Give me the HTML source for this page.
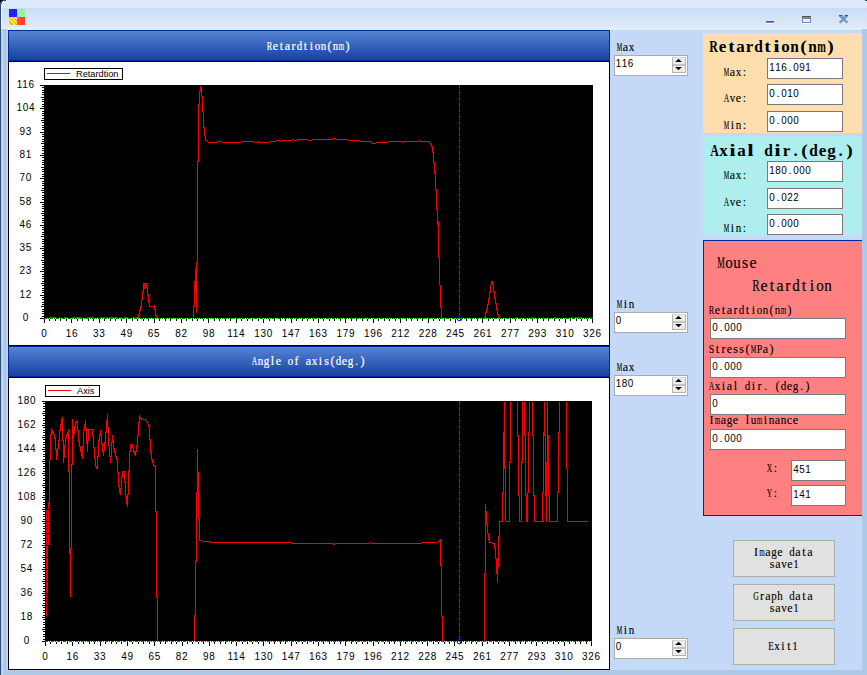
<!DOCTYPE html>
<html><head><meta charset="utf-8">
<style>
*{margin:0;padding:0;box-sizing:border-box}
html,body{width:867px;height:675px;overflow:hidden;background:#b0c9eb}
body{position:relative;font-family:"Liberation Sans",sans-serif}
.a{position:absolute}
.lg{font-family:"Liberation Sans",sans-serif;font-size:9.5px;fill:#000}
.ax{font-family:"Liberation Sans",sans-serif;font-size:10px;fill:#000;letter-spacing:0.7px}
.box{position:absolute;background:#fff;border:1px solid #7a7a7a}
.spin{position:absolute;background:#fff;border:1px solid #ababab}
.btn{position:absolute;background:#e1e1e1;border:1px solid #adadad}
.hdr{position:absolute;background:linear-gradient(#5584d4,#1741a0);border:1px solid #002c98}
</style></head><body>

<div class="a" style="left:0;top:0;width:7px;height:7px;background:#2e4e78"></div>
<div class="a" style="left:0;top:0;width:2px;height:3px;background:#000"></div>
<div class="a" style="left:0;top:0;width:1px;height:675px;background:#2e4e78"></div>
<div class="a" style="left:1px;top:0;width:866px;height:29px;background:linear-gradient(#e5ecf8 0,#dee9f9 1px,#dee9f9 8px,#c9dcf6 8px,#dfeafa 27px,#dfeafa 28px,#dff6ff 28px,#e0f4ff 29px);border-top-left-radius:4px;"></div>
<div class="a" style="left:1px;top:4px;width:1px;height:25px;background:#eef5fd"></div>
<svg class="a" style="left:0;top:0" width="8" height="8" shape-rendering="crispEdges"><rect x="0" y="0" width="2" height="2" fill="#000"/><rect x="2" y="0" width="4" height="1" fill="#2a4a74"/><rect x="1" y="1" width="2" height="1" fill="#3a5f90"/><rect x="0" y="2" width="1" height="6" fill="#2e4e78"/><rect x="1" y="2" width="1" height="2" fill="#4a70a0"/><rect x="3" y="1" width="2" height="1" fill="#f0f6ff"/><rect x="2" y="2" width="1" height="2" fill="#f0f6ff"/></svg>
<div class="a" style="left:865px;top:0;width:2px;height:1px;background:#2a4a74"></div><div class="a" style="left:865px;top:1px;width:2px;height:1px;background:#eef4fc"></div>
<div class="a" style="left:1px;top:29px;width:1px;height:646px;background:#b4cce8"></div>
<div class="a" style="left:2px;top:29px;width:1px;height:646px;background:#c4d9f4"></div>
<div class="a" style="left:7px;top:29px;width:1px;height:641px;background:#c0dcff"></div>
<div class="a" style="left:9px;top:9px;width:8px;height:8px;background:#2323ff"></div>
<div class="a" style="left:17px;top:9px;width:8px;height:8px;background:repeating-linear-gradient(-45deg,#9ff29f 0,#9ff29f 3px,#92e892 3px,#92e892 4px)"></div>
<div class="a" style="left:9px;top:17px;width:8px;height:8px;background:repeating-linear-gradient(45deg,#ffe033 0,#ffe033 2px,#d8b830 2px,#d8b830 3px)"></div>
<div class="a" style="left:17px;top:17px;width:8px;height:8px;background:linear-gradient(90deg,#ff5040,#ff4030 60%,#e04838)"></div>
<div class="a" style="left:766px;top:21px;width:8px;height:1px;background:#5a5a5a"></div><div class="a" style="left:766px;top:22px;width:8px;height:1px;background:#6f88b4"></div><div class="a" style="left:766px;top:23px;width:8px;height:1px;background:#f4f8ff"></div>
<div class="a" style="left:802px;top:16px;width:9px;height:1px;background:#555"></div><div class="a" style="left:802px;top:17px;width:9px;height:6px;border:1px solid #7088b4;border-top:2px solid #7088b4;background:#e4eefc"></div><div class="a" style="left:802px;top:23px;width:9px;height:1px;background:#f4f8ff"></div>
<svg class="a" style="left:836px;top:13px" width="14" height="12" viewBox="0 0 14 12"><path d="M3.6 2.8 L11.4 9.8 M11.4 2.8 L3.6 9.8" stroke="#7090c0" stroke-width="2.2"/><path d="M3 2.5 h3 M9 2.5 h3" stroke="#555" stroke-width="1"/><path d="M6 2.5 L7.5 3.8 L9 2.5" stroke="#506890" stroke-width="1" fill="none"/></svg>
<div class="a" style="left:8px;top:29px;width:854px;height:641px;background:#c3d9f7"></div>
<div class="a" style="left:8px;top:29px;width:854px;height:1px;background:#d8ecff"></div>
<div class="hdr" style="left:8px;top:30px;width:602px;height:31px"></div>
<div class="a" style="left:8px;top:61px;width:602px;height:285px;border:1px solid #000;background:#fff"></div>
<div class="hdr" style="left:8px;top:346px;width:602px;height:31px"></div>
<div class="a" style="left:8px;top:377px;width:602px;height:293px;border:1px solid #000;background:#fff"></div>
<svg class="a" style="left:0;top:0" width="867" height="675" viewBox="0 0 867 675"><rect x="44" y="85" width="549" height="233" fill="#000"/>
<rect x="40" y="318" width="4" height="1" fill="#000"/>
<rect x="42" y="316" width="2" height="1" fill="#000"/>
<rect x="42" y="313" width="2" height="1" fill="#000"/>
<rect x="42" y="311" width="2" height="1" fill="#000"/>
<rect x="42" y="309" width="2" height="1" fill="#000"/>
<rect x="41" y="306" width="3" height="1" fill="#000"/>
<rect x="42" y="304" width="2" height="1" fill="#000"/>
<rect x="42" y="302" width="2" height="1" fill="#000"/>
<rect x="42" y="299" width="2" height="1" fill="#000"/>
<rect x="42" y="297" width="2" height="1" fill="#000"/>
<rect x="40" y="295" width="4" height="1" fill="#000"/>
<rect x="42" y="292" width="2" height="1" fill="#000"/>
<rect x="42" y="290" width="2" height="1" fill="#000"/>
<rect x="42" y="288" width="2" height="1" fill="#000"/>
<rect x="42" y="285" width="2" height="1" fill="#000"/>
<rect x="41" y="283" width="3" height="1" fill="#000"/>
<rect x="42" y="281" width="2" height="1" fill="#000"/>
<rect x="42" y="278" width="2" height="1" fill="#000"/>
<rect x="42" y="276" width="2" height="1" fill="#000"/>
<rect x="42" y="274" width="2" height="1" fill="#000"/>
<rect x="40" y="271" width="4" height="1" fill="#000"/>
<rect x="42" y="269" width="2" height="1" fill="#000"/>
<rect x="42" y="267" width="2" height="1" fill="#000"/>
<rect x="42" y="264" width="2" height="1" fill="#000"/>
<rect x="42" y="262" width="2" height="1" fill="#000"/>
<rect x="41" y="260" width="3" height="1" fill="#000"/>
<rect x="42" y="257" width="2" height="1" fill="#000"/>
<rect x="42" y="255" width="2" height="1" fill="#000"/>
<rect x="42" y="253" width="2" height="1" fill="#000"/>
<rect x="42" y="250" width="2" height="1" fill="#000"/>
<rect x="40" y="248" width="4" height="1" fill="#000"/>
<rect x="42" y="246" width="2" height="1" fill="#000"/>
<rect x="42" y="243" width="2" height="1" fill="#000"/>
<rect x="42" y="241" width="2" height="1" fill="#000"/>
<rect x="42" y="239" width="2" height="1" fill="#000"/>
<rect x="41" y="236" width="3" height="1" fill="#000"/>
<rect x="42" y="234" width="2" height="1" fill="#000"/>
<rect x="42" y="232" width="2" height="1" fill="#000"/>
<rect x="42" y="229" width="2" height="1" fill="#000"/>
<rect x="42" y="227" width="2" height="1" fill="#000"/>
<rect x="40" y="225" width="4" height="1" fill="#000"/>
<rect x="42" y="222" width="2" height="1" fill="#000"/>
<rect x="42" y="220" width="2" height="1" fill="#000"/>
<rect x="42" y="218" width="2" height="1" fill="#000"/>
<rect x="42" y="215" width="2" height="1" fill="#000"/>
<rect x="41" y="213" width="3" height="1" fill="#000"/>
<rect x="42" y="211" width="2" height="1" fill="#000"/>
<rect x="42" y="208" width="2" height="1" fill="#000"/>
<rect x="42" y="206" width="2" height="1" fill="#000"/>
<rect x="42" y="204" width="2" height="1" fill="#000"/>
<rect x="40" y="202" width="4" height="1" fill="#000"/>
<rect x="42" y="199" width="2" height="1" fill="#000"/>
<rect x="42" y="197" width="2" height="1" fill="#000"/>
<rect x="42" y="195" width="2" height="1" fill="#000"/>
<rect x="42" y="192" width="2" height="1" fill="#000"/>
<rect x="41" y="190" width="3" height="1" fill="#000"/>
<rect x="42" y="188" width="2" height="1" fill="#000"/>
<rect x="42" y="185" width="2" height="1" fill="#000"/>
<rect x="42" y="183" width="2" height="1" fill="#000"/>
<rect x="42" y="181" width="2" height="1" fill="#000"/>
<rect x="40" y="178" width="4" height="1" fill="#000"/>
<rect x="42" y="176" width="2" height="1" fill="#000"/>
<rect x="42" y="174" width="2" height="1" fill="#000"/>
<rect x="42" y="171" width="2" height="1" fill="#000"/>
<rect x="42" y="169" width="2" height="1" fill="#000"/>
<rect x="41" y="167" width="3" height="1" fill="#000"/>
<rect x="42" y="164" width="2" height="1" fill="#000"/>
<rect x="42" y="162" width="2" height="1" fill="#000"/>
<rect x="42" y="160" width="2" height="1" fill="#000"/>
<rect x="42" y="157" width="2" height="1" fill="#000"/>
<rect x="40" y="155" width="4" height="1" fill="#000"/>
<rect x="42" y="153" width="2" height="1" fill="#000"/>
<rect x="42" y="150" width="2" height="1" fill="#000"/>
<rect x="42" y="148" width="2" height="1" fill="#000"/>
<rect x="42" y="146" width="2" height="1" fill="#000"/>
<rect x="41" y="143" width="3" height="1" fill="#000"/>
<rect x="42" y="141" width="2" height="1" fill="#000"/>
<rect x="42" y="139" width="2" height="1" fill="#000"/>
<rect x="42" y="136" width="2" height="1" fill="#000"/>
<rect x="42" y="134" width="2" height="1" fill="#000"/>
<rect x="40" y="132" width="4" height="1" fill="#000"/>
<rect x="42" y="129" width="2" height="1" fill="#000"/>
<rect x="42" y="127" width="2" height="1" fill="#000"/>
<rect x="42" y="125" width="2" height="1" fill="#000"/>
<rect x="42" y="122" width="2" height="1" fill="#000"/>
<rect x="41" y="120" width="3" height="1" fill="#000"/>
<rect x="42" y="118" width="2" height="1" fill="#000"/>
<rect x="42" y="115" width="2" height="1" fill="#000"/>
<rect x="42" y="113" width="2" height="1" fill="#000"/>
<rect x="42" y="111" width="2" height="1" fill="#000"/>
<rect x="40" y="108" width="4" height="1" fill="#000"/>
<rect x="42" y="106" width="2" height="1" fill="#000"/>
<rect x="42" y="104" width="2" height="1" fill="#000"/>
<rect x="42" y="101" width="2" height="1" fill="#000"/>
<rect x="42" y="99" width="2" height="1" fill="#000"/>
<rect x="41" y="97" width="3" height="1" fill="#000"/>
<rect x="42" y="94" width="2" height="1" fill="#000"/>
<rect x="42" y="92" width="2" height="1" fill="#000"/>
<rect x="42" y="90" width="2" height="1" fill="#000"/>
<rect x="42" y="87" width="2" height="1" fill="#000"/>
<rect x="40" y="85" width="4" height="1" fill="#000"/>
<text x="25.8" y="321.0" text-anchor="middle" class="ax">0</text>
<text x="25.8" y="297.7" text-anchor="middle" class="ax">12</text>
<text x="25.8" y="274.4" text-anchor="middle" class="ax">23</text>
<text x="25.8" y="251.1" text-anchor="middle" class="ax">35</text>
<text x="25.8" y="227.8" text-anchor="middle" class="ax">46</text>
<text x="25.8" y="204.5" text-anchor="middle" class="ax">58</text>
<text x="25.8" y="181.2" text-anchor="middle" class="ax">70</text>
<text x="25.8" y="157.9" text-anchor="middle" class="ax">81</text>
<text x="25.8" y="134.6" text-anchor="middle" class="ax">93</text>
<text x="25.8" y="111.3" text-anchor="middle" class="ax">104</text>
<text x="25.8" y="88.0" text-anchor="middle" class="ax">116</text>
<rect x="44" y="319" width="1" height="4" fill="#000"/>
<rect x="49" y="319" width="1" height="2" fill="#000"/>
<rect x="55" y="319" width="1" height="2" fill="#000"/>
<rect x="60" y="319" width="1" height="2" fill="#000"/>
<rect x="66" y="319" width="1" height="2" fill="#000"/>
<rect x="71" y="319" width="1" height="4" fill="#000"/>
<rect x="77" y="319" width="1" height="2" fill="#000"/>
<rect x="82" y="319" width="1" height="2" fill="#000"/>
<rect x="88" y="319" width="1" height="2" fill="#000"/>
<rect x="93" y="319" width="1" height="2" fill="#000"/>
<rect x="99" y="319" width="1" height="4" fill="#000"/>
<rect x="104" y="319" width="1" height="2" fill="#000"/>
<rect x="110" y="319" width="1" height="2" fill="#000"/>
<rect x="115" y="319" width="1" height="2" fill="#000"/>
<rect x="121" y="319" width="1" height="2" fill="#000"/>
<rect x="126" y="319" width="1" height="4" fill="#000"/>
<rect x="132" y="319" width="1" height="2" fill="#000"/>
<rect x="137" y="319" width="1" height="2" fill="#000"/>
<rect x="143" y="319" width="1" height="2" fill="#000"/>
<rect x="148" y="319" width="1" height="2" fill="#000"/>
<rect x="154" y="319" width="1" height="4" fill="#000"/>
<rect x="159" y="319" width="1" height="2" fill="#000"/>
<rect x="165" y="319" width="1" height="2" fill="#000"/>
<rect x="170" y="319" width="1" height="2" fill="#000"/>
<rect x="176" y="319" width="1" height="2" fill="#000"/>
<rect x="181" y="319" width="1" height="4" fill="#000"/>
<rect x="186" y="319" width="1" height="2" fill="#000"/>
<rect x="192" y="319" width="1" height="2" fill="#000"/>
<rect x="197" y="319" width="1" height="2" fill="#000"/>
<rect x="203" y="319" width="1" height="2" fill="#000"/>
<rect x="208" y="319" width="1" height="4" fill="#000"/>
<rect x="214" y="319" width="1" height="2" fill="#000"/>
<rect x="219" y="319" width="1" height="2" fill="#000"/>
<rect x="225" y="319" width="1" height="2" fill="#000"/>
<rect x="230" y="319" width="1" height="2" fill="#000"/>
<rect x="236" y="319" width="1" height="4" fill="#000"/>
<rect x="241" y="319" width="1" height="2" fill="#000"/>
<rect x="247" y="319" width="1" height="2" fill="#000"/>
<rect x="252" y="319" width="1" height="2" fill="#000"/>
<rect x="258" y="319" width="1" height="2" fill="#000"/>
<rect x="263" y="319" width="1" height="4" fill="#000"/>
<rect x="269" y="319" width="1" height="2" fill="#000"/>
<rect x="274" y="319" width="1" height="2" fill="#000"/>
<rect x="280" y="319" width="1" height="2" fill="#000"/>
<rect x="285" y="319" width="1" height="2" fill="#000"/>
<rect x="291" y="319" width="1" height="4" fill="#000"/>
<rect x="296" y="319" width="1" height="2" fill="#000"/>
<rect x="302" y="319" width="1" height="2" fill="#000"/>
<rect x="307" y="319" width="1" height="2" fill="#000"/>
<rect x="313" y="319" width="1" height="2" fill="#000"/>
<rect x="318" y="319" width="1" height="4" fill="#000"/>
<rect x="323" y="319" width="1" height="2" fill="#000"/>
<rect x="329" y="319" width="1" height="2" fill="#000"/>
<rect x="334" y="319" width="1" height="2" fill="#000"/>
<rect x="340" y="319" width="1" height="2" fill="#000"/>
<rect x="345" y="319" width="1" height="4" fill="#000"/>
<rect x="351" y="319" width="1" height="2" fill="#000"/>
<rect x="356" y="319" width="1" height="2" fill="#000"/>
<rect x="362" y="319" width="1" height="2" fill="#000"/>
<rect x="367" y="319" width="1" height="2" fill="#000"/>
<rect x="373" y="319" width="1" height="4" fill="#000"/>
<rect x="378" y="319" width="1" height="2" fill="#000"/>
<rect x="384" y="319" width="1" height="2" fill="#000"/>
<rect x="389" y="319" width="1" height="2" fill="#000"/>
<rect x="395" y="319" width="1" height="2" fill="#000"/>
<rect x="400" y="319" width="1" height="4" fill="#000"/>
<rect x="406" y="319" width="1" height="2" fill="#000"/>
<rect x="411" y="319" width="1" height="2" fill="#000"/>
<rect x="417" y="319" width="1" height="2" fill="#000"/>
<rect x="422" y="319" width="1" height="2" fill="#000"/>
<rect x="428" y="319" width="1" height="4" fill="#000"/>
<rect x="433" y="319" width="1" height="2" fill="#000"/>
<rect x="439" y="319" width="1" height="2" fill="#000"/>
<rect x="444" y="319" width="1" height="2" fill="#000"/>
<rect x="450" y="319" width="1" height="2" fill="#000"/>
<rect x="455" y="319" width="1" height="4" fill="#000"/>
<rect x="460" y="319" width="1" height="2" fill="#000"/>
<rect x="466" y="319" width="1" height="2" fill="#000"/>
<rect x="471" y="319" width="1" height="2" fill="#000"/>
<rect x="477" y="319" width="1" height="2" fill="#000"/>
<rect x="482" y="319" width="1" height="4" fill="#000"/>
<rect x="488" y="319" width="1" height="2" fill="#000"/>
<rect x="493" y="319" width="1" height="2" fill="#000"/>
<rect x="499" y="319" width="1" height="2" fill="#000"/>
<rect x="504" y="319" width="1" height="2" fill="#000"/>
<rect x="510" y="319" width="1" height="4" fill="#000"/>
<rect x="515" y="319" width="1" height="2" fill="#000"/>
<rect x="521" y="319" width="1" height="2" fill="#000"/>
<rect x="526" y="319" width="1" height="2" fill="#000"/>
<rect x="532" y="319" width="1" height="2" fill="#000"/>
<rect x="537" y="319" width="1" height="4" fill="#000"/>
<rect x="543" y="319" width="1" height="2" fill="#000"/>
<rect x="548" y="319" width="1" height="2" fill="#000"/>
<rect x="554" y="319" width="1" height="2" fill="#000"/>
<rect x="559" y="319" width="1" height="2" fill="#000"/>
<rect x="565" y="319" width="1" height="4" fill="#000"/>
<rect x="570" y="319" width="1" height="2" fill="#000"/>
<rect x="576" y="319" width="1" height="2" fill="#000"/>
<rect x="581" y="319" width="1" height="2" fill="#000"/>
<rect x="587" y="319" width="1" height="2" fill="#000"/>
<rect x="592" y="319" width="1" height="4" fill="#000"/>
<text x="44.5" y="337" text-anchor="middle" class="ax">0</text>
<text x="71.9" y="337" text-anchor="middle" class="ax">16</text>
<text x="99.3" y="337" text-anchor="middle" class="ax">33</text>
<text x="126.7" y="337" text-anchor="middle" class="ax">49</text>
<text x="154.1" y="337" text-anchor="middle" class="ax">65</text>
<text x="181.5" y="337" text-anchor="middle" class="ax">82</text>
<text x="208.9" y="337" text-anchor="middle" class="ax">98</text>
<text x="236.3" y="337" text-anchor="middle" class="ax">114</text>
<text x="263.7" y="337" text-anchor="middle" class="ax">130</text>
<text x="291.1" y="337" text-anchor="middle" class="ax">147</text>
<text x="318.5" y="337" text-anchor="middle" class="ax">163</text>
<text x="345.9" y="337" text-anchor="middle" class="ax">179</text>
<text x="373.3" y="337" text-anchor="middle" class="ax">196</text>
<text x="400.7" y="337" text-anchor="middle" class="ax">212</text>
<text x="428.1" y="337" text-anchor="middle" class="ax">228</text>
<text x="455.5" y="337" text-anchor="middle" class="ax">245</text>
<text x="482.9" y="337" text-anchor="middle" class="ax">261</text>
<text x="510.3" y="337" text-anchor="middle" class="ax">277</text>
<text x="537.7" y="337" text-anchor="middle" class="ax">293</text>
<text x="565.1" y="337" text-anchor="middle" class="ax">310</text>
<text x="592.5" y="337" text-anchor="middle" class="ax">326</text>
<line x1="44" y1="318.5" x2="593" y2="318.5" stroke="#009000" stroke-width="1" stroke-dasharray="3,1,1,1" shape-rendering="crispEdges"/>
<clipPath id="c44_85"><rect x="44" y="86" width="549" height="232"/></clipPath>
<polyline points="44,320" fill="none" stroke="#ff0000" stroke-width="1" shape-rendering="crispEdges" clip-path="url(#c44_85)"/>
<line x1="459.5" y1="85" x2="459.5" y2="318" stroke="#008800" stroke-width="1" stroke-dasharray="3,1,1,1" shape-rendering="crispEdges"/>
<circle cx="459.5" cy="318.3" r="2.5" fill="none" stroke="#0000ff" stroke-width="1"/>
<rect x="44.5" y="68.5" width="78" height="11" fill="#fff" stroke="#000" stroke-width="1"/>
<rect x="47" y="73" width="23" height="1" fill="#f00"/>
<text x="76" y="76.8" class="lg" textLength="42.5" lengthAdjust="spacingAndGlyphs">Retardtion</text>
<rect x="49" y="317" width="7" height="1" fill="#f00"/>
<rect x="59" y="317" width="1" height="1" fill="#f00"/>
<rect x="64" y="317" width="3" height="1" fill="#f00"/>
<rect x="72" y="317" width="10" height="1" fill="#f00"/>
<rect x="87" y="317" width="7" height="1" fill="#f00"/>
<rect x="97" y="317" width="1" height="1" fill="#f00"/>
<rect x="100" y="317" width="7" height="1" fill="#f00"/>
<rect x="109" y="317" width="8" height="1" fill="#f00"/>
<rect x="120" y="317" width="1" height="1" fill="#f00"/>
<rect x="124" y="317" width="3" height="1" fill="#f00"/>
<rect x="133" y="317" width="5" height="1" fill="#f00"/>
<rect x="516" y="317" width="1" height="1" fill="#f00"/>
<rect x="531" y="317" width="2" height="1" fill="#f00"/>
<rect x="543" y="317" width="1" height="1" fill="#f00"/>
<rect x="554" y="317" width="2" height="1" fill="#f00"/>
<rect x="571" y="317" width="2" height="1" fill="#f00"/>
<rect x="575" y="317" width="6" height="1" fill="#f00"/>
<rect x="585" y="317" width="1" height="1" fill="#f00"/>
<rect x="590" y="317" width="1" height="1" fill="#f00"/>
<rect x="138" y="314" width="1" height="4" fill="#f00"/>
<rect x="139" y="310" width="1" height="5" fill="#f00"/>
<rect x="140" y="306" width="1" height="5" fill="#f00"/>
<rect x="141" y="299" width="1" height="8" fill="#f00"/>
<rect x="142" y="291" width="1" height="9" fill="#f00"/>
<rect x="143" y="283" width="1" height="9" fill="#f00"/>
<rect x="144" y="283" width="1" height="6" fill="#f00"/>
<rect x="146" y="283" width="1" height="5" fill="#f00"/>
<rect x="147" y="287" width="1" height="8" fill="#f00"/>
<rect x="148" y="294" width="1" height="9" fill="#f00"/>
<rect x="149" y="302" width="1" height="5" fill="#f00"/>
<rect x="154" y="305" width="1" height="5" fill="#f00"/>
<rect x="155" y="309" width="1" height="7" fill="#f00"/>
<rect x="156" y="315" width="1" height="3" fill="#f00"/>
<rect x="193" y="306" width="1" height="12" fill="#f00"/>
<rect x="194" y="281" width="1" height="26" fill="#f00"/>
<rect x="195" y="268" width="1" height="24" fill="#f00"/>
<rect x="196" y="262" width="1" height="51" fill="#f00"/>
<rect x="197" y="161" width="1" height="102" fill="#f00"/>
<rect x="198" y="104" width="1" height="58" fill="#f00"/>
<rect x="199" y="91" width="1" height="14" fill="#f00"/>
<rect x="200" y="86" width="1" height="6" fill="#f00"/>
<rect x="201" y="88" width="1" height="9" fill="#f00"/>
<rect x="202" y="96" width="1" height="16" fill="#f00"/>
<rect x="203" y="111" width="1" height="17" fill="#f00"/>
<rect x="204" y="127" width="1" height="9" fill="#f00"/>
<rect x="205" y="135" width="1" height="6" fill="#f00"/>
<rect x="429" y="142" width="1" height="1" fill="#f00"/>
<rect x="430" y="143" width="1" height="2" fill="#f00"/>
<rect x="431" y="145" width="1" height="2" fill="#f00"/>
<rect x="432" y="146" width="1" height="7" fill="#f00"/>
<rect x="433" y="152" width="1" height="11" fill="#f00"/>
<rect x="434" y="162" width="1" height="12" fill="#f00"/>
<rect x="435" y="173" width="1" height="17" fill="#f00"/>
<rect x="436" y="189" width="1" height="21" fill="#f00"/>
<rect x="437" y="209" width="1" height="16" fill="#f00"/>
<rect x="438" y="221" width="1" height="37" fill="#f00"/>
<rect x="439" y="258" width="1" height="27" fill="#f00"/>
<rect x="440" y="285" width="1" height="23" fill="#f00"/>
<rect x="441" y="308" width="1" height="10" fill="#f00"/>
<rect x="484" y="317" width="1" height="1" fill="#f00"/>
<rect x="485" y="312" width="1" height="6" fill="#f00"/>
<rect x="486" y="309" width="1" height="4" fill="#f00"/>
<rect x="487" y="304" width="1" height="6" fill="#f00"/>
<rect x="488" y="298" width="1" height="7" fill="#f00"/>
<rect x="489" y="292" width="1" height="7" fill="#f00"/>
<rect x="490" y="285" width="1" height="8" fill="#f00"/>
<rect x="491" y="281" width="1" height="4" fill="#f00"/>
<rect x="492" y="281" width="1" height="4" fill="#f00"/>
<rect x="493" y="285" width="1" height="7" fill="#f00"/>
<rect x="494" y="291" width="1" height="8" fill="#f00"/>
<rect x="495" y="298" width="1" height="6" fill="#f00"/>
<rect x="496" y="303" width="1" height="7" fill="#f00"/>
<rect x="497" y="309" width="1" height="6" fill="#f00"/>
<rect x="498" y="314" width="1" height="4" fill="#f00"/>
<rect x="134" y="317" width="4" height="1" fill="#f00"/>
<rect x="145" y="283" width="1" height="1" fill="#f00"/>
<rect x="150" y="306" width="4" height="1" fill="#f00"/>
<rect x="206" y="140" width="1" height="1" fill="#f00"/>
<rect x="207" y="141" width="1" height="1" fill="#f00"/>
<rect x="208" y="142" width="9" height="1" fill="#f00"/>
<rect x="217" y="141" width="5" height="1" fill="#f00"/>
<rect x="222" y="142" width="20" height="1" fill="#f00"/>
<rect x="242" y="141" width="12" height="1" fill="#f00"/>
<rect x="254" y="142" width="3" height="1" fill="#f00"/>
<rect x="257" y="141" width="2" height="1" fill="#f00"/>
<rect x="259" y="142" width="11" height="1" fill="#f00"/>
<rect x="270" y="141" width="6" height="1" fill="#f00"/>
<rect x="276" y="140" width="3" height="1" fill="#f00"/>
<rect x="279" y="141" width="2" height="1" fill="#f00"/>
<rect x="281" y="140" width="11" height="1" fill="#f00"/>
<rect x="292" y="139" width="2" height="1" fill="#f00"/>
<rect x="294" y="140" width="3" height="1" fill="#f00"/>
<rect x="297" y="139" width="11" height="1" fill="#f00"/>
<rect x="308" y="140" width="4" height="1" fill="#f00"/>
<rect x="312" y="139" width="20" height="1" fill="#f00"/>
<rect x="332" y="138" width="1" height="1" fill="#f00"/>
<rect x="333" y="139" width="1" height="1" fill="#f00"/>
<rect x="334" y="138" width="1" height="1" fill="#f00"/>
<rect x="335" y="139" width="13" height="1" fill="#f00"/>
<rect x="348" y="140" width="11" height="1" fill="#f00"/>
<rect x="359" y="141" width="12" height="1" fill="#f00"/>
<rect x="371" y="142" width="1" height="1" fill="#f00"/>
<rect x="372" y="143" width="4" height="1" fill="#f00"/>
<rect x="376" y="142" width="12" height="1" fill="#f00"/>
<rect x="388" y="141" width="14" height="1" fill="#f00"/>
<rect x="402" y="142" width="1" height="1" fill="#f00"/>
<rect x="403" y="141" width="15" height="1" fill="#f00"/>
<rect x="418" y="140" width="1" height="1" fill="#f00"/>
<rect x="419" y="141" width="10" height="1" fill="#f00"/>
<rect x="45" y="401" width="547" height="240" fill="#000"/>
<rect x="42" y="641" width="3" height="1" fill="#000"/>
<rect x="43" y="639" width="2" height="1" fill="#000"/>
<rect x="43" y="636" width="2" height="1" fill="#000"/>
<rect x="43" y="634" width="2" height="1" fill="#000"/>
<rect x="43" y="631" width="2" height="1" fill="#000"/>
<rect x="42" y="629" width="3" height="1" fill="#000"/>
<rect x="43" y="627" width="2" height="1" fill="#000"/>
<rect x="43" y="624" width="2" height="1" fill="#000"/>
<rect x="43" y="622" width="2" height="1" fill="#000"/>
<rect x="43" y="619" width="2" height="1" fill="#000"/>
<rect x="42" y="617" width="3" height="1" fill="#000"/>
<rect x="43" y="615" width="2" height="1" fill="#000"/>
<rect x="43" y="612" width="2" height="1" fill="#000"/>
<rect x="43" y="610" width="2" height="1" fill="#000"/>
<rect x="43" y="607" width="2" height="1" fill="#000"/>
<rect x="42" y="605" width="3" height="1" fill="#000"/>
<rect x="43" y="603" width="2" height="1" fill="#000"/>
<rect x="43" y="600" width="2" height="1" fill="#000"/>
<rect x="43" y="598" width="2" height="1" fill="#000"/>
<rect x="43" y="595" width="2" height="1" fill="#000"/>
<rect x="42" y="593" width="3" height="1" fill="#000"/>
<rect x="43" y="591" width="2" height="1" fill="#000"/>
<rect x="43" y="588" width="2" height="1" fill="#000"/>
<rect x="43" y="586" width="2" height="1" fill="#000"/>
<rect x="43" y="583" width="2" height="1" fill="#000"/>
<rect x="42" y="581" width="3" height="1" fill="#000"/>
<rect x="43" y="579" width="2" height="1" fill="#000"/>
<rect x="43" y="576" width="2" height="1" fill="#000"/>
<rect x="43" y="574" width="2" height="1" fill="#000"/>
<rect x="43" y="571" width="2" height="1" fill="#000"/>
<rect x="42" y="569" width="3" height="1" fill="#000"/>
<rect x="43" y="567" width="2" height="1" fill="#000"/>
<rect x="43" y="564" width="2" height="1" fill="#000"/>
<rect x="43" y="562" width="2" height="1" fill="#000"/>
<rect x="43" y="559" width="2" height="1" fill="#000"/>
<rect x="42" y="557" width="3" height="1" fill="#000"/>
<rect x="43" y="555" width="2" height="1" fill="#000"/>
<rect x="43" y="552" width="2" height="1" fill="#000"/>
<rect x="43" y="550" width="2" height="1" fill="#000"/>
<rect x="43" y="547" width="2" height="1" fill="#000"/>
<rect x="42" y="545" width="3" height="1" fill="#000"/>
<rect x="43" y="543" width="2" height="1" fill="#000"/>
<rect x="43" y="540" width="2" height="1" fill="#000"/>
<rect x="43" y="538" width="2" height="1" fill="#000"/>
<rect x="43" y="535" width="2" height="1" fill="#000"/>
<rect x="42" y="533" width="3" height="1" fill="#000"/>
<rect x="43" y="531" width="2" height="1" fill="#000"/>
<rect x="43" y="528" width="2" height="1" fill="#000"/>
<rect x="43" y="526" width="2" height="1" fill="#000"/>
<rect x="43" y="523" width="2" height="1" fill="#000"/>
<rect x="42" y="521" width="3" height="1" fill="#000"/>
<rect x="43" y="519" width="2" height="1" fill="#000"/>
<rect x="43" y="516" width="2" height="1" fill="#000"/>
<rect x="43" y="514" width="2" height="1" fill="#000"/>
<rect x="43" y="511" width="2" height="1" fill="#000"/>
<rect x="42" y="509" width="3" height="1" fill="#000"/>
<rect x="43" y="507" width="2" height="1" fill="#000"/>
<rect x="43" y="504" width="2" height="1" fill="#000"/>
<rect x="43" y="502" width="2" height="1" fill="#000"/>
<rect x="43" y="499" width="2" height="1" fill="#000"/>
<rect x="42" y="497" width="3" height="1" fill="#000"/>
<rect x="43" y="495" width="2" height="1" fill="#000"/>
<rect x="43" y="492" width="2" height="1" fill="#000"/>
<rect x="43" y="490" width="2" height="1" fill="#000"/>
<rect x="43" y="487" width="2" height="1" fill="#000"/>
<rect x="42" y="485" width="3" height="1" fill="#000"/>
<rect x="43" y="483" width="2" height="1" fill="#000"/>
<rect x="43" y="480" width="2" height="1" fill="#000"/>
<rect x="43" y="478" width="2" height="1" fill="#000"/>
<rect x="43" y="475" width="2" height="1" fill="#000"/>
<rect x="42" y="473" width="3" height="1" fill="#000"/>
<rect x="43" y="471" width="2" height="1" fill="#000"/>
<rect x="43" y="468" width="2" height="1" fill="#000"/>
<rect x="43" y="466" width="2" height="1" fill="#000"/>
<rect x="43" y="463" width="2" height="1" fill="#000"/>
<rect x="42" y="461" width="3" height="1" fill="#000"/>
<rect x="43" y="459" width="2" height="1" fill="#000"/>
<rect x="43" y="456" width="2" height="1" fill="#000"/>
<rect x="43" y="454" width="2" height="1" fill="#000"/>
<rect x="43" y="451" width="2" height="1" fill="#000"/>
<rect x="42" y="449" width="3" height="1" fill="#000"/>
<rect x="43" y="447" width="2" height="1" fill="#000"/>
<rect x="43" y="444" width="2" height="1" fill="#000"/>
<rect x="43" y="442" width="2" height="1" fill="#000"/>
<rect x="43" y="439" width="2" height="1" fill="#000"/>
<rect x="42" y="437" width="3" height="1" fill="#000"/>
<rect x="43" y="435" width="2" height="1" fill="#000"/>
<rect x="43" y="432" width="2" height="1" fill="#000"/>
<rect x="43" y="430" width="2" height="1" fill="#000"/>
<rect x="43" y="427" width="2" height="1" fill="#000"/>
<rect x="42" y="425" width="3" height="1" fill="#000"/>
<rect x="43" y="423" width="2" height="1" fill="#000"/>
<rect x="43" y="420" width="2" height="1" fill="#000"/>
<rect x="43" y="418" width="2" height="1" fill="#000"/>
<rect x="43" y="415" width="2" height="1" fill="#000"/>
<rect x="42" y="413" width="3" height="1" fill="#000"/>
<rect x="43" y="411" width="2" height="1" fill="#000"/>
<rect x="43" y="408" width="2" height="1" fill="#000"/>
<rect x="43" y="406" width="2" height="1" fill="#000"/>
<rect x="43" y="403" width="2" height="1" fill="#000"/>
<rect x="42" y="401" width="3" height="1" fill="#000"/>
<text x="26.8" y="644.0" text-anchor="middle" class="ax">0</text>
<text x="26.8" y="620.0" text-anchor="middle" class="ax">18</text>
<text x="26.8" y="596.0" text-anchor="middle" class="ax">36</text>
<text x="26.8" y="572.0" text-anchor="middle" class="ax">54</text>
<text x="26.8" y="548.0" text-anchor="middle" class="ax">72</text>
<text x="26.8" y="524.0" text-anchor="middle" class="ax">90</text>
<text x="26.8" y="500.0" text-anchor="middle" class="ax">108</text>
<text x="26.8" y="476.0" text-anchor="middle" class="ax">126</text>
<text x="26.8" y="452.0" text-anchor="middle" class="ax">144</text>
<text x="26.8" y="428.0" text-anchor="middle" class="ax">162</text>
<text x="26.8" y="404.0" text-anchor="middle" class="ax">180</text>
<rect x="45" y="642" width="1" height="4" fill="#000"/>
<rect x="50" y="642" width="1" height="2" fill="#000"/>
<rect x="56" y="642" width="1" height="2" fill="#000"/>
<rect x="61" y="642" width="1" height="2" fill="#000"/>
<rect x="67" y="642" width="1" height="2" fill="#000"/>
<rect x="72" y="642" width="1" height="4" fill="#000"/>
<rect x="78" y="642" width="1" height="2" fill="#000"/>
<rect x="83" y="642" width="1" height="2" fill="#000"/>
<rect x="89" y="642" width="1" height="2" fill="#000"/>
<rect x="94" y="642" width="1" height="2" fill="#000"/>
<rect x="100" y="642" width="1" height="4" fill="#000"/>
<rect x="105" y="642" width="1" height="2" fill="#000"/>
<rect x="111" y="642" width="1" height="2" fill="#000"/>
<rect x="116" y="642" width="1" height="2" fill="#000"/>
<rect x="121" y="642" width="1" height="2" fill="#000"/>
<rect x="127" y="642" width="1" height="4" fill="#000"/>
<rect x="132" y="642" width="1" height="2" fill="#000"/>
<rect x="138" y="642" width="1" height="2" fill="#000"/>
<rect x="143" y="642" width="1" height="2" fill="#000"/>
<rect x="149" y="642" width="1" height="2" fill="#000"/>
<rect x="154" y="642" width="1" height="4" fill="#000"/>
<rect x="160" y="642" width="1" height="2" fill="#000"/>
<rect x="165" y="642" width="1" height="2" fill="#000"/>
<rect x="171" y="642" width="1" height="2" fill="#000"/>
<rect x="176" y="642" width="1" height="2" fill="#000"/>
<rect x="182" y="642" width="1" height="4" fill="#000"/>
<rect x="187" y="642" width="1" height="2" fill="#000"/>
<rect x="192" y="642" width="1" height="2" fill="#000"/>
<rect x="198" y="642" width="1" height="2" fill="#000"/>
<rect x="203" y="642" width="1" height="2" fill="#000"/>
<rect x="209" y="642" width="1" height="4" fill="#000"/>
<rect x="214" y="642" width="1" height="2" fill="#000"/>
<rect x="220" y="642" width="1" height="2" fill="#000"/>
<rect x="225" y="642" width="1" height="2" fill="#000"/>
<rect x="231" y="642" width="1" height="2" fill="#000"/>
<rect x="236" y="642" width="1" height="4" fill="#000"/>
<rect x="242" y="642" width="1" height="2" fill="#000"/>
<rect x="247" y="642" width="1" height="2" fill="#000"/>
<rect x="252" y="642" width="1" height="2" fill="#000"/>
<rect x="258" y="642" width="1" height="2" fill="#000"/>
<rect x="263" y="642" width="1" height="4" fill="#000"/>
<rect x="269" y="642" width="1" height="2" fill="#000"/>
<rect x="274" y="642" width="1" height="2" fill="#000"/>
<rect x="280" y="642" width="1" height="2" fill="#000"/>
<rect x="285" y="642" width="1" height="2" fill="#000"/>
<rect x="291" y="642" width="1" height="4" fill="#000"/>
<rect x="296" y="642" width="1" height="2" fill="#000"/>
<rect x="302" y="642" width="1" height="2" fill="#000"/>
<rect x="307" y="642" width="1" height="2" fill="#000"/>
<rect x="313" y="642" width="1" height="2" fill="#000"/>
<rect x="318" y="642" width="1" height="4" fill="#000"/>
<rect x="323" y="642" width="1" height="2" fill="#000"/>
<rect x="329" y="642" width="1" height="2" fill="#000"/>
<rect x="334" y="642" width="1" height="2" fill="#000"/>
<rect x="340" y="642" width="1" height="2" fill="#000"/>
<rect x="345" y="642" width="1" height="4" fill="#000"/>
<rect x="351" y="642" width="1" height="2" fill="#000"/>
<rect x="356" y="642" width="1" height="2" fill="#000"/>
<rect x="362" y="642" width="1" height="2" fill="#000"/>
<rect x="367" y="642" width="1" height="2" fill="#000"/>
<rect x="373" y="642" width="1" height="4" fill="#000"/>
<rect x="378" y="642" width="1" height="2" fill="#000"/>
<rect x="384" y="642" width="1" height="2" fill="#000"/>
<rect x="389" y="642" width="1" height="2" fill="#000"/>
<rect x="394" y="642" width="1" height="2" fill="#000"/>
<rect x="400" y="642" width="1" height="4" fill="#000"/>
<rect x="405" y="642" width="1" height="2" fill="#000"/>
<rect x="411" y="642" width="1" height="2" fill="#000"/>
<rect x="416" y="642" width="1" height="2" fill="#000"/>
<rect x="422" y="642" width="1" height="2" fill="#000"/>
<rect x="427" y="642" width="1" height="4" fill="#000"/>
<rect x="433" y="642" width="1" height="2" fill="#000"/>
<rect x="438" y="642" width="1" height="2" fill="#000"/>
<rect x="444" y="642" width="1" height="2" fill="#000"/>
<rect x="449" y="642" width="1" height="2" fill="#000"/>
<rect x="454" y="642" width="1" height="4" fill="#000"/>
<rect x="460" y="642" width="1" height="2" fill="#000"/>
<rect x="465" y="642" width="1" height="2" fill="#000"/>
<rect x="471" y="642" width="1" height="2" fill="#000"/>
<rect x="476" y="642" width="1" height="2" fill="#000"/>
<rect x="482" y="642" width="1" height="4" fill="#000"/>
<rect x="487" y="642" width="1" height="2" fill="#000"/>
<rect x="493" y="642" width="1" height="2" fill="#000"/>
<rect x="498" y="642" width="1" height="2" fill="#000"/>
<rect x="504" y="642" width="1" height="2" fill="#000"/>
<rect x="509" y="642" width="1" height="4" fill="#000"/>
<rect x="515" y="642" width="1" height="2" fill="#000"/>
<rect x="520" y="642" width="1" height="2" fill="#000"/>
<rect x="525" y="642" width="1" height="2" fill="#000"/>
<rect x="531" y="642" width="1" height="2" fill="#000"/>
<rect x="536" y="642" width="1" height="4" fill="#000"/>
<rect x="542" y="642" width="1" height="2" fill="#000"/>
<rect x="547" y="642" width="1" height="2" fill="#000"/>
<rect x="553" y="642" width="1" height="2" fill="#000"/>
<rect x="558" y="642" width="1" height="2" fill="#000"/>
<rect x="564" y="642" width="1" height="4" fill="#000"/>
<rect x="569" y="642" width="1" height="2" fill="#000"/>
<rect x="575" y="642" width="1" height="2" fill="#000"/>
<rect x="580" y="642" width="1" height="2" fill="#000"/>
<rect x="586" y="642" width="1" height="2" fill="#000"/>
<rect x="591" y="642" width="1" height="4" fill="#000"/>
<text x="45.5" y="660" text-anchor="middle" class="ax">0</text>
<text x="72.8" y="660" text-anchor="middle" class="ax">16</text>
<text x="100.1" y="660" text-anchor="middle" class="ax">33</text>
<text x="127.4" y="660" text-anchor="middle" class="ax">49</text>
<text x="154.7" y="660" text-anchor="middle" class="ax">65</text>
<text x="182.0" y="660" text-anchor="middle" class="ax">82</text>
<text x="209.3" y="660" text-anchor="middle" class="ax">98</text>
<text x="236.6" y="660" text-anchor="middle" class="ax">114</text>
<text x="263.9" y="660" text-anchor="middle" class="ax">130</text>
<text x="291.2" y="660" text-anchor="middle" class="ax">147</text>
<text x="318.5" y="660" text-anchor="middle" class="ax">163</text>
<text x="345.8" y="660" text-anchor="middle" class="ax">179</text>
<text x="373.1" y="660" text-anchor="middle" class="ax">196</text>
<text x="400.4" y="660" text-anchor="middle" class="ax">212</text>
<text x="427.7" y="660" text-anchor="middle" class="ax">228</text>
<text x="455.0" y="660" text-anchor="middle" class="ax">245</text>
<text x="482.3" y="660" text-anchor="middle" class="ax">261</text>
<text x="509.6" y="660" text-anchor="middle" class="ax">277</text>
<text x="536.9" y="660" text-anchor="middle" class="ax">293</text>
<text x="564.2" y="660" text-anchor="middle" class="ax">310</text>
<text x="591.5" y="660" text-anchor="middle" class="ax">326</text>
<line x1="45" y1="641.5" x2="592" y2="641.5" stroke="#009000" stroke-width="1" stroke-dasharray="3,1,1,1" shape-rendering="crispEdges"/>
<clipPath id="c45_401"><rect x="45" y="402" width="547" height="239"/></clipPath>
<polyline points="45,643" fill="none" stroke="#ff0000" stroke-width="1" shape-rendering="crispEdges" clip-path="url(#c45_401)"/>
<line x1="459.5" y1="401" x2="459.5" y2="641" stroke="#008800" stroke-width="1" stroke-dasharray="3,1,1,1" shape-rendering="crispEdges"/>
<circle cx="459.5" cy="641.3" r="2.5" fill="none" stroke="#0000ff" stroke-width="1"/>
<rect x="45.5" y="385.5" width="54" height="11" fill="#fff" stroke="#000" stroke-width="1"/>
<rect x="48" y="390" width="23" height="1" fill="#f00"/>
<text x="77" y="393.8" class="lg" textLength="17.5" lengthAdjust="spacingAndGlyphs">Axis</text>
<rect x="73" y="428" width="1" height="10" fill="#f00"/>
<rect x="74" y="426" width="1" height="8" fill="#f00"/>
<rect x="75" y="422" width="1" height="5" fill="#f00"/>
<rect x="76" y="421" width="1" height="2" fill="#f00"/>
<rect x="77" y="420" width="1" height="11" fill="#f00"/>
<rect x="78" y="430" width="1" height="12" fill="#f00"/>
<rect x="79" y="441" width="1" height="6" fill="#f00"/>
<rect x="80" y="446" width="1" height="6" fill="#f00"/>
<rect x="81" y="450" width="1" height="6" fill="#f00"/>
<rect x="82" y="446" width="1" height="13" fill="#f00"/>
<rect x="83" y="430" width="1" height="17" fill="#f00"/>
<rect x="84" y="424" width="1" height="7" fill="#f00"/>
<rect x="85" y="420" width="1" height="9" fill="#f00"/>
<rect x="86" y="428" width="1" height="16" fill="#f00"/>
<rect x="87" y="440" width="1" height="12" fill="#f00"/>
<rect x="88" y="429" width="1" height="12" fill="#f00"/>
<rect x="92" y="429" width="1" height="8" fill="#f00"/>
<rect x="93" y="436" width="1" height="12" fill="#f00"/>
<rect x="94" y="447" width="1" height="12" fill="#f00"/>
<rect x="95" y="458" width="1" height="9" fill="#f00"/>
<rect x="96" y="466" width="1" height="3" fill="#f00"/>
<rect x="97" y="456" width="1" height="13" fill="#f00"/>
<rect x="98" y="440" width="1" height="17" fill="#f00"/>
<rect x="99" y="434" width="1" height="7" fill="#f00"/>
<rect x="100" y="430" width="1" height="6" fill="#f00"/>
<rect x="101" y="435" width="1" height="9" fill="#f00"/>
<rect x="102" y="443" width="1" height="9" fill="#f00"/>
<rect x="103" y="450" width="1" height="6" fill="#f00"/>
<rect x="104" y="442" width="1" height="9" fill="#f00"/>
<rect x="105" y="432" width="1" height="11" fill="#f00"/>
<rect x="106" y="420" width="1" height="13" fill="#f00"/>
<rect x="107" y="414" width="1" height="14" fill="#f00"/>
<rect x="108" y="427" width="1" height="19" fill="#f00"/>
<rect x="109" y="445" width="1" height="12" fill="#f00"/>
<rect x="110" y="456" width="1" height="7" fill="#f00"/>
<rect x="111" y="442" width="1" height="15" fill="#f00"/>
<rect x="112" y="435" width="1" height="8" fill="#f00"/>
<rect x="113" y="441" width="1" height="8" fill="#f00"/>
<rect x="114" y="448" width="1" height="5" fill="#f00"/>
<rect x="115" y="452" width="1" height="5" fill="#f00"/>
<rect x="116" y="456" width="1" height="4" fill="#f00"/>
<rect x="117" y="459" width="1" height="14" fill="#f00"/>
<rect x="118" y="472" width="1" height="15" fill="#f00"/>
<rect x="119" y="486" width="1" height="7" fill="#f00"/>
<rect x="120" y="488" width="1" height="7" fill="#f00"/>
<rect x="121" y="477" width="1" height="12" fill="#f00"/>
<rect x="122" y="471" width="1" height="7" fill="#f00"/>
<rect x="124" y="471" width="1" height="12" fill="#f00"/>
<rect x="125" y="482" width="1" height="15" fill="#f00"/>
<rect x="126" y="496" width="1" height="8" fill="#f00"/>
<rect x="127" y="494" width="1" height="13" fill="#f00"/>
<rect x="128" y="470" width="1" height="25" fill="#f00"/>
<rect x="129" y="451" width="1" height="20" fill="#f00"/>
<rect x="130" y="444" width="1" height="8" fill="#f00"/>
<rect x="132" y="444" width="1" height="4" fill="#f00"/>
<rect x="133" y="447" width="1" height="5" fill="#f00"/>
<rect x="134" y="451" width="1" height="4" fill="#f00"/>
<rect x="135" y="451" width="1" height="5" fill="#f00"/>
<rect x="46" y="510" width="1" height="106" fill="#f00"/>
<rect x="47" y="545" width="1" height="48" fill="#f00"/>
<rect x="48" y="502" width="1" height="44" fill="#f00"/>
<rect x="49" y="460" width="1" height="43" fill="#f00"/>
<rect x="50" y="434" width="1" height="26" fill="#f00"/>
<rect x="51" y="428" width="1" height="7" fill="#f00"/>
<rect x="52" y="430" width="1" height="4" fill="#f00"/>
<rect x="53" y="432" width="1" height="3" fill="#f00"/>
<rect x="54" y="434" width="1" height="5" fill="#f00"/>
<rect x="55" y="438" width="1" height="12" fill="#f00"/>
<rect x="56" y="449" width="1" height="11" fill="#f00"/>
<rect x="57" y="448" width="1" height="8" fill="#f00"/>
<rect x="58" y="440" width="1" height="9" fill="#f00"/>
<rect x="59" y="430" width="1" height="11" fill="#f00"/>
<rect x="60" y="424" width="1" height="7" fill="#f00"/>
<rect x="61" y="419" width="1" height="6" fill="#f00"/>
<rect x="62" y="417" width="1" height="24" fill="#f00"/>
<rect x="63" y="440" width="1" height="23" fill="#f00"/>
<rect x="64" y="445" width="1" height="13" fill="#f00"/>
<rect x="65" y="438" width="1" height="8" fill="#f00"/>
<rect x="66" y="434" width="1" height="5" fill="#f00"/>
<rect x="67" y="432" width="1" height="3" fill="#f00"/>
<rect x="68" y="429" width="1" height="43" fill="#f00"/>
<rect x="69" y="471" width="1" height="83" fill="#f00"/>
<rect x="70" y="548" width="1" height="49" fill="#f00"/>
<rect x="71" y="464" width="1" height="85" fill="#f00"/>
<rect x="72" y="419" width="1" height="46" fill="#f00"/>
<rect x="136" y="445" width="1" height="7" fill="#f00"/>
<rect x="137" y="435" width="1" height="11" fill="#f00"/>
<rect x="138" y="422" width="1" height="14" fill="#f00"/>
<rect x="139" y="415" width="1" height="8" fill="#f00"/>
<rect x="140" y="417" width="1" height="2" fill="#f00"/>
<rect x="141" y="418" width="1" height="2" fill="#f00"/>
<rect x="145" y="420" width="1" height="1" fill="#f00"/>
<rect x="146" y="421" width="1" height="1" fill="#f00"/>
<rect x="147" y="422" width="1" height="2" fill="#f00"/>
<rect x="148" y="424" width="1" height="3" fill="#f00"/>
<rect x="149" y="426" width="1" height="14" fill="#f00"/>
<rect x="150" y="439" width="1" height="15" fill="#f00"/>
<rect x="151" y="453" width="1" height="7" fill="#f00"/>
<rect x="152" y="459" width="1" height="4" fill="#f00"/>
<rect x="153" y="462" width="1" height="4" fill="#f00"/>
<rect x="154" y="465" width="1" height="2" fill="#f00"/>
<rect x="155" y="466" width="1" height="46" fill="#f00"/>
<rect x="156" y="511" width="1" height="87" fill="#f00"/>
<rect x="157" y="598" width="1" height="43" fill="#f00"/>
<rect x="194" y="615" width="1" height="26" fill="#f00"/>
<rect x="195" y="561" width="1" height="55" fill="#f00"/>
<rect x="196" y="492" width="1" height="70" fill="#f00"/>
<rect x="197" y="449" width="1" height="44" fill="#f00"/>
<rect x="198" y="472" width="1" height="47" fill="#f00"/>
<rect x="199" y="518" width="1" height="23" fill="#f00"/>
<rect x="438" y="541" width="1" height="1" fill="#f00"/>
<rect x="439" y="540" width="1" height="1" fill="#f00"/>
<rect x="440" y="539" width="1" height="27" fill="#f00"/>
<rect x="441" y="565" width="1" height="52" fill="#f00"/>
<rect x="442" y="616" width="1" height="25" fill="#f00"/>
<rect x="484" y="573" width="1" height="68" fill="#f00"/>
<rect x="485" y="504" width="1" height="70" fill="#f00"/>
<rect x="486" y="511" width="1" height="14" fill="#f00"/>
<rect x="487" y="524" width="1" height="10" fill="#f00"/>
<rect x="488" y="533" width="1" height="7" fill="#f00"/>
<rect x="489" y="539" width="1" height="4" fill="#f00"/>
<rect x="494" y="543" width="1" height="6" fill="#f00"/>
<rect x="495" y="548" width="1" height="11" fill="#f00"/>
<rect x="496" y="558" width="1" height="16" fill="#f00"/>
<rect x="497" y="566" width="1" height="16" fill="#f00"/>
<rect x="498" y="536" width="1" height="31" fill="#f00"/>
<rect x="499" y="521" width="1" height="16" fill="#f00"/>
<rect x="502" y="492" width="1" height="30" fill="#f00"/>
<rect x="503" y="432" width="1" height="61" fill="#f00"/>
<rect x="504" y="402" width="1" height="67" fill="#f00"/>
<rect x="505" y="469" width="1" height="53" fill="#f00"/>
<rect x="509" y="462" width="1" height="60" fill="#f00"/>
<rect x="510" y="402" width="1" height="61" fill="#f00"/>
<rect x="517" y="402" width="1" height="34" fill="#f00"/>
<rect x="518" y="435" width="1" height="61" fill="#f00"/>
<rect x="519" y="495" width="1" height="27" fill="#f00"/>
<rect x="521" y="462" width="1" height="60" fill="#f00"/>
<rect x="522" y="402" width="1" height="61" fill="#f00"/>
<rect x="524" y="402" width="1" height="34" fill="#f00"/>
<rect x="525" y="435" width="1" height="61" fill="#f00"/>
<rect x="526" y="495" width="1" height="27" fill="#f00"/>
<rect x="527" y="492" width="1" height="30" fill="#f00"/>
<rect x="528" y="432" width="1" height="61" fill="#f00"/>
<rect x="529" y="402" width="1" height="31" fill="#f00"/>
<rect x="532" y="402" width="1" height="34" fill="#f00"/>
<rect x="533" y="435" width="1" height="61" fill="#f00"/>
<rect x="534" y="495" width="1" height="27" fill="#f00"/>
<rect x="542" y="492" width="1" height="30" fill="#f00"/>
<rect x="543" y="432" width="1" height="61" fill="#f00"/>
<rect x="544" y="402" width="1" height="34" fill="#f00"/>
<rect x="545" y="435" width="1" height="61" fill="#f00"/>
<rect x="546" y="462" width="1" height="60" fill="#f00"/>
<rect x="547" y="402" width="1" height="61" fill="#f00"/>
<rect x="548" y="435" width="1" height="61" fill="#f00"/>
<rect x="549" y="495" width="1" height="27" fill="#f00"/>
<rect x="557" y="492" width="1" height="30" fill="#f00"/>
<rect x="558" y="432" width="1" height="61" fill="#f00"/>
<rect x="559" y="402" width="1" height="31" fill="#f00"/>
<rect x="566" y="402" width="1" height="67" fill="#f00"/>
<rect x="567" y="469" width="1" height="53" fill="#f00"/>
<rect x="89" y="429" width="3" height="1" fill="#f00"/>
<rect x="123" y="471" width="1" height="1" fill="#f00"/>
<rect x="131" y="444" width="1" height="1" fill="#f00"/>
<rect x="142" y="419" width="3" height="1" fill="#f00"/>
<rect x="199" y="540" width="3" height="1" fill="#f00"/>
<rect x="202" y="541" width="7" height="1" fill="#f00"/>
<rect x="209" y="542" width="82" height="1" fill="#f00"/>
<rect x="291" y="543" width="42" height="1" fill="#f00"/>
<rect x="333" y="544" width="2" height="1" fill="#f00"/>
<rect x="335" y="543" width="35" height="1" fill="#f00"/>
<rect x="370" y="542" width="1" height="1" fill="#f00"/>
<rect x="371" y="543" width="51" height="1" fill="#f00"/>
<rect x="422" y="542" width="16" height="1" fill="#f00"/>
<rect x="490" y="542" width="2" height="1" fill="#f00"/>
<rect x="492" y="543" width="2" height="1" fill="#f00"/>
<rect x="499" y="521" width="4" height="1" fill="#f00"/>
<rect x="505" y="521" width="5" height="1" fill="#f00"/>
<rect x="519" y="521" width="3" height="1" fill="#f00"/>
<rect x="526" y="521" width="2" height="1" fill="#f00"/>
<rect x="534" y="521" width="9" height="1" fill="#f00"/>
<rect x="549" y="521" width="9" height="1" fill="#f00"/>
<rect x="567" y="521" width="21" height="1" fill="#f00"/>
<rect x="45" y="629" width="4" height="1" fill="#000"/>
<rect x="45" y="617" width="4" height="1" fill="#000"/>
<rect x="45" y="605" width="4" height="1" fill="#000"/>
<rect x="45" y="593" width="4" height="1" fill="#000"/>
<rect x="45" y="581" width="4" height="1" fill="#000"/>
<rect x="45" y="569" width="4" height="1" fill="#000"/>
<rect x="45" y="557" width="4" height="1" fill="#000"/>
<rect x="45" y="545" width="4" height="1" fill="#000"/>
<rect x="45" y="533" width="4" height="1" fill="#000"/>
<rect x="45" y="521" width="4" height="1" fill="#000"/>
<rect x="45" y="509" width="4" height="1" fill="#000"/>
<rect x="45" y="497" width="4" height="1" fill="#000"/>
<rect x="45" y="485" width="4" height="1" fill="#000"/>
<rect x="45" y="473" width="4" height="1" fill="#000"/>
<rect x="45" y="461" width="4" height="1" fill="#000"/>
<rect x="45" y="449" width="4" height="1" fill="#000"/>
<rect x="45" y="437" width="4" height="1" fill="#000"/>
<rect x="45" y="425" width="4" height="1" fill="#000"/>
<rect x="45" y="413" width="4" height="1" fill="#000"/></svg>
<div class="spin" style="left:614px;top:55px;width:74px;height:21px"><div style="position:absolute;left:57px;top:1px;width:14px;height:16px;background:#ececec;border:1px solid #b4b4b4;border-top-color:#d8d8d8;border-bottom-color:#b4b4b4"></div><svg style="position:absolute;left:58px;top:2px" width="12" height="14"><path d="M2.2 4 L5.5 0.8 L8.8 4Z" fill="#000"/><path d="M2.2 9 L5.5 12.2 L8.8 9Z" fill="#000"/><rect x="0" y="6" width="12" height="2" fill="#c4c4c4"/></svg></div>
<div class="spin" style="left:614px;top:312px;width:74px;height:21px"><div style="position:absolute;left:57px;top:1px;width:14px;height:16px;background:#ececec;border:1px solid #b4b4b4;border-top-color:#d8d8d8;border-bottom-color:#b4b4b4"></div><svg style="position:absolute;left:58px;top:2px" width="12" height="14"><path d="M2.2 4 L5.5 0.8 L8.8 4Z" fill="#000"/><path d="M2.2 9 L5.5 12.2 L8.8 9Z" fill="#000"/><rect x="0" y="6" width="12" height="2" fill="#c4c4c4"/></svg></div>
<div class="spin" style="left:614px;top:375px;width:74px;height:21px"><div style="position:absolute;left:57px;top:1px;width:14px;height:16px;background:#ececec;border:1px solid #b4b4b4;border-top-color:#d8d8d8;border-bottom-color:#b4b4b4"></div><svg style="position:absolute;left:58px;top:2px" width="12" height="14"><path d="M2.2 4 L5.5 0.8 L8.8 4Z" fill="#000"/><path d="M2.2 9 L5.5 12.2 L8.8 9Z" fill="#000"/><rect x="0" y="6" width="12" height="2" fill="#c4c4c4"/></svg></div>
<div class="spin" style="left:614px;top:638px;width:74px;height:21px"><div style="position:absolute;left:57px;top:1px;width:14px;height:16px;background:#ececec;border:1px solid #b4b4b4;border-top-color:#d8d8d8;border-bottom-color:#b4b4b4"></div><svg style="position:absolute;left:58px;top:2px" width="12" height="14"><path d="M2.2 4 L5.5 0.8 L8.8 4Z" fill="#000"/><path d="M2.2 9 L5.5 12.2 L8.8 9Z" fill="#000"/><rect x="0" y="6" width="12" height="2" fill="#c4c4c4"/></svg></div>
<div class="a" style="left:703px;top:33px;width:159px;height:100px;background:#ffdead"></div>
<div class="a" style="left:703px;top:136px;width:159px;height:100px;background:#afeeee"></div>
<div class="a" style="left:703px;top:240px;width:159px;height:276px;background:#ff8080;border:1px solid #00289a;border-right:none"></div>
<div class="box" style="left:767px;top:58px;width:76px;height:21px"></div>
<div class="box" style="left:767px;top:84px;width:76px;height:21px"></div>
<div class="box" style="left:767px;top:111px;width:76px;height:21px"></div>
<div class="box" style="left:767px;top:161px;width:76px;height:21px"></div>
<div class="box" style="left:767px;top:188px;width:76px;height:21px"></div>
<div class="box" style="left:767px;top:214px;width:76px;height:21px"></div>
<div class="box" style="left:710px;top:318px;width:136px;height:21px"></div>
<div class="box" style="left:710px;top:357px;width:136px;height:21px"></div>
<div class="box" style="left:710px;top:394px;width:136px;height:21px"></div>
<div class="box" style="left:710px;top:429px;width:136px;height:21px"></div>
<div class="box" style="left:791px;top:460px;width:55px;height:21px"></div>
<div class="box" style="left:791px;top:485px;width:55px;height:21px"></div>
<div class="btn" style="left:733px;top:540px;width:102px;height:37px"></div>
<div class="btn" style="left:733px;top:584px;width:102px;height:37px"></div>
<div class="btn" style="left:733px;top:628px;width:102px;height:37px"></div>
<svg class="a" style="left:0;top:0" width="867" height="675" viewBox="0 0 867 675"><text y="50" font-family="Liberation Serif" font-size="12" font-weight="normal" fill="#fff" stroke="#fff" stroke-width="0.2"><tspan x="266.75" textLength="5.50" lengthAdjust="spacingAndGlyphs">R</tspan><tspan x="272.84">e</tspan><tspan x="279.83">t</tspan><tspan x="284.84">a</tspan><tspan x="291.50">r</tspan><tspan x="296.75" textLength="5.50" lengthAdjust="spacingAndGlyphs">d</tspan><tspan x="303.83">t</tspan><tspan x="309.83">i</tspan><tspan x="314.75" textLength="5.50" lengthAdjust="spacingAndGlyphs">o</tspan><tspan x="320.75" textLength="5.50" lengthAdjust="spacingAndGlyphs">n</tspan><tspan x="327.50">(</tspan><tspan x="332.75" textLength="5.50" lengthAdjust="spacingAndGlyphs">n</tspan><tspan x="338.75" textLength="5.50" lengthAdjust="spacingAndGlyphs">m</tspan><tspan x="345.50">)</tspan></text>
<text y="365" font-family="Liberation Serif" font-size="12" font-weight="normal" fill="#fff" stroke="#fff" stroke-width="0.2"><tspan x="251.75" textLength="5.50" lengthAdjust="spacingAndGlyphs">A</tspan><tspan x="257.75" textLength="5.50" lengthAdjust="spacingAndGlyphs">n</tspan><tspan x="263.75" textLength="5.50" lengthAdjust="spacingAndGlyphs">g</tspan><tspan x="270.83">l</tspan><tspan x="275.84">e</tspan><tspan x="287.75" textLength="5.50" lengthAdjust="spacingAndGlyphs">o</tspan><tspan x="294.50">f</tspan><tspan x="305.84">a</tspan><tspan x="311.75" textLength="5.50" lengthAdjust="spacingAndGlyphs">x</tspan><tspan x="318.83">i</tspan><tspan x="324.16">s</tspan><tspan x="330.50">(</tspan><tspan x="335.75" textLength="5.50" lengthAdjust="spacingAndGlyphs">d</tspan><tspan x="341.84">e</tspan><tspan x="347.75" textLength="5.50" lengthAdjust="spacingAndGlyphs">g</tspan><tspan x="355.00">.</tspan><tspan x="360.50">)</tspan></text>
<text y="51" font-family="Liberation Serif" font-size="12" font-weight="normal" fill="#000" stroke="#000" stroke-width="0.12"><tspan x="616.75" textLength="5.50" lengthAdjust="spacingAndGlyphs">M</tspan><tspan x="622.84">a</tspan><tspan x="628.75" textLength="5.50" lengthAdjust="spacingAndGlyphs">x</tspan></text>
<text y="67" font-family="Liberation Sans" font-size="11.5" font-weight="normal" fill="#000"><tspan x="615.75" textLength="5.50" lengthAdjust="spacingAndGlyphs">1</tspan><tspan x="621.75" textLength="5.50" lengthAdjust="spacingAndGlyphs">1</tspan><tspan x="627.75" textLength="5.50" lengthAdjust="spacingAndGlyphs">6</tspan></text>
<text y="308" font-family="Liberation Serif" font-size="12" font-weight="normal" fill="#000" stroke="#000" stroke-width="0.12"><tspan x="616.75" textLength="5.50" lengthAdjust="spacingAndGlyphs">M</tspan><tspan x="623.83">i</tspan><tspan x="628.75" textLength="5.50" lengthAdjust="spacingAndGlyphs">n</tspan></text>
<text y="324" font-family="Liberation Sans" font-size="11.5" font-weight="normal" fill="#000"><tspan x="615.75" textLength="5.50" lengthAdjust="spacingAndGlyphs">0</tspan></text>
<text y="371" font-family="Liberation Serif" font-size="12" font-weight="normal" fill="#000" stroke="#000" stroke-width="0.12"><tspan x="616.75" textLength="5.50" lengthAdjust="spacingAndGlyphs">M</tspan><tspan x="622.84">a</tspan><tspan x="628.75" textLength="5.50" lengthAdjust="spacingAndGlyphs">x</tspan></text>
<text y="387" font-family="Liberation Sans" font-size="11.5" font-weight="normal" fill="#000"><tspan x="615.75" textLength="5.50" lengthAdjust="spacingAndGlyphs">1</tspan><tspan x="621.75" textLength="5.50" lengthAdjust="spacingAndGlyphs">8</tspan><tspan x="627.75" textLength="5.50" lengthAdjust="spacingAndGlyphs">0</tspan></text>
<text y="634" font-family="Liberation Serif" font-size="12" font-weight="normal" fill="#000" stroke="#000" stroke-width="0.12"><tspan x="616.75" textLength="5.50" lengthAdjust="spacingAndGlyphs">M</tspan><tspan x="623.83">i</tspan><tspan x="628.75" textLength="5.50" lengthAdjust="spacingAndGlyphs">n</tspan></text>
<text y="650" font-family="Liberation Sans" font-size="11.5" font-weight="normal" fill="#000"><tspan x="615.75" textLength="5.50" lengthAdjust="spacingAndGlyphs">0</tspan></text>
<text y="52" font-family="Liberation Serif" font-size="17" font-weight="bold" fill="#000"><tspan x="709.20" textLength="8.60" lengthAdjust="spacingAndGlyphs">R</tspan><tspan x="718.73">e</tspan><tspan x="728.25" textLength="6.50" lengthAdjust="spacingAndGlyphs">t</tspan><tspan x="736.25">a</tspan><tspan x="745.73">r</tspan><tspan x="754.20" textLength="8.60" lengthAdjust="spacingAndGlyphs">d</tspan><tspan x="764.25" textLength="6.50" lengthAdjust="spacingAndGlyphs">t</tspan><tspan x="773.25" textLength="6.50" lengthAdjust="spacingAndGlyphs">i</tspan><tspan x="781.25">o</tspan><tspan x="790.20" textLength="8.60" lengthAdjust="spacingAndGlyphs">n</tspan><tspan x="800.25" textLength="6.50" lengthAdjust="spacingAndGlyphs">(</tspan><tspan x="808.20" textLength="8.60" lengthAdjust="spacingAndGlyphs">n</tspan><tspan x="817.20" textLength="8.60" lengthAdjust="spacingAndGlyphs">m</tspan><tspan x="827.25" textLength="6.50" lengthAdjust="spacingAndGlyphs">)</tspan></text>
<text y="156" font-family="Liberation Serif" font-size="17" font-weight="bold" fill="#000"><tspan x="710.20" textLength="8.60" lengthAdjust="spacingAndGlyphs">A</tspan><tspan x="719.25">x</tspan><tspan x="729.25" textLength="6.50" lengthAdjust="spacingAndGlyphs">i</tspan><tspan x="737.25">a</tspan><tspan x="747.25" textLength="6.50" lengthAdjust="spacingAndGlyphs">l</tspan><tspan x="764.20" textLength="8.60" lengthAdjust="spacingAndGlyphs">d</tspan><tspan x="774.25" textLength="6.50" lengthAdjust="spacingAndGlyphs">i</tspan><tspan x="782.73">r</tspan><tspan x="793.38">.</tspan><tspan x="801.25" textLength="6.50" lengthAdjust="spacingAndGlyphs">(</tspan><tspan x="809.20" textLength="8.60" lengthAdjust="spacingAndGlyphs">d</tspan><tspan x="818.73">e</tspan><tspan x="827.25">g</tspan><tspan x="838.38">.</tspan><tspan x="846.25" textLength="6.50" lengthAdjust="spacingAndGlyphs">)</tspan></text>
<text y="76" font-family="Liberation Serif" font-size="12" font-weight="normal" fill="#000" stroke="#000" stroke-width="0.12"><tspan x="723.75" textLength="5.50" lengthAdjust="spacingAndGlyphs">M</tspan><tspan x="729.84">a</tspan><tspan x="735.75" textLength="5.50" lengthAdjust="spacingAndGlyphs">x</tspan><tspan x="742.83">:</tspan></text>
<text y="71" font-family="Liberation Sans" font-size="11.5" font-weight="normal" fill="#000"><tspan x="769.25" textLength="5.50" lengthAdjust="spacingAndGlyphs">1</tspan><tspan x="775.25" textLength="5.50" lengthAdjust="spacingAndGlyphs">1</tspan><tspan x="781.25" textLength="5.50" lengthAdjust="spacingAndGlyphs">6</tspan><tspan x="788.40">.</tspan><tspan x="793.25" textLength="5.50" lengthAdjust="spacingAndGlyphs">0</tspan><tspan x="799.25" textLength="5.50" lengthAdjust="spacingAndGlyphs">9</tspan><tspan x="805.25" textLength="5.50" lengthAdjust="spacingAndGlyphs">1</tspan></text>
<text y="102" font-family="Liberation Serif" font-size="12" font-weight="normal" fill="#000" stroke="#000" stroke-width="0.12"><tspan x="723.75" textLength="5.50" lengthAdjust="spacingAndGlyphs">A</tspan><tspan x="729.75" textLength="5.50" lengthAdjust="spacingAndGlyphs">v</tspan><tspan x="735.84">e</tspan><tspan x="742.83">:</tspan></text>
<text y="97" font-family="Liberation Sans" font-size="11.5" font-weight="normal" fill="#000"><tspan x="769.25" textLength="5.50" lengthAdjust="spacingAndGlyphs">0</tspan><tspan x="776.40">.</tspan><tspan x="781.25" textLength="5.50" lengthAdjust="spacingAndGlyphs">0</tspan><tspan x="787.25" textLength="5.50" lengthAdjust="spacingAndGlyphs">1</tspan><tspan x="793.25" textLength="5.50" lengthAdjust="spacingAndGlyphs">0</tspan></text>
<text y="129" font-family="Liberation Serif" font-size="12" font-weight="normal" fill="#000" stroke="#000" stroke-width="0.12"><tspan x="723.75" textLength="5.50" lengthAdjust="spacingAndGlyphs">M</tspan><tspan x="730.83">i</tspan><tspan x="735.75" textLength="5.50" lengthAdjust="spacingAndGlyphs">n</tspan><tspan x="742.83">:</tspan></text>
<text y="124" font-family="Liberation Sans" font-size="11.5" font-weight="normal" fill="#000"><tspan x="769.25" textLength="5.50" lengthAdjust="spacingAndGlyphs">0</tspan><tspan x="776.40">.</tspan><tspan x="781.25" textLength="5.50" lengthAdjust="spacingAndGlyphs">0</tspan><tspan x="787.25" textLength="5.50" lengthAdjust="spacingAndGlyphs">0</tspan><tspan x="793.25" textLength="5.50" lengthAdjust="spacingAndGlyphs">0</tspan></text>
<text y="179" font-family="Liberation Serif" font-size="12" font-weight="normal" fill="#000" stroke="#000" stroke-width="0.12"><tspan x="723.75" textLength="5.50" lengthAdjust="spacingAndGlyphs">M</tspan><tspan x="729.84">a</tspan><tspan x="735.75" textLength="5.50" lengthAdjust="spacingAndGlyphs">x</tspan><tspan x="742.83">:</tspan></text>
<text y="174" font-family="Liberation Sans" font-size="11.5" font-weight="normal" fill="#000"><tspan x="769.25" textLength="5.50" lengthAdjust="spacingAndGlyphs">1</tspan><tspan x="775.25" textLength="5.50" lengthAdjust="spacingAndGlyphs">8</tspan><tspan x="781.25" textLength="5.50" lengthAdjust="spacingAndGlyphs">0</tspan><tspan x="788.40">.</tspan><tspan x="793.25" textLength="5.50" lengthAdjust="spacingAndGlyphs">0</tspan><tspan x="799.25" textLength="5.50" lengthAdjust="spacingAndGlyphs">0</tspan><tspan x="805.25" textLength="5.50" lengthAdjust="spacingAndGlyphs">0</tspan></text>
<text y="206" font-family="Liberation Serif" font-size="12" font-weight="normal" fill="#000" stroke="#000" stroke-width="0.12"><tspan x="723.75" textLength="5.50" lengthAdjust="spacingAndGlyphs">A</tspan><tspan x="729.75" textLength="5.50" lengthAdjust="spacingAndGlyphs">v</tspan><tspan x="735.84">e</tspan><tspan x="742.83">:</tspan></text>
<text y="201" font-family="Liberation Sans" font-size="11.5" font-weight="normal" fill="#000"><tspan x="769.25" textLength="5.50" lengthAdjust="spacingAndGlyphs">0</tspan><tspan x="776.40">.</tspan><tspan x="781.25" textLength="5.50" lengthAdjust="spacingAndGlyphs">0</tspan><tspan x="787.25" textLength="5.50" lengthAdjust="spacingAndGlyphs">2</tspan><tspan x="793.25" textLength="5.50" lengthAdjust="spacingAndGlyphs">2</tspan></text>
<text y="232" font-family="Liberation Serif" font-size="12" font-weight="normal" fill="#000" stroke="#000" stroke-width="0.12"><tspan x="723.75" textLength="5.50" lengthAdjust="spacingAndGlyphs">M</tspan><tspan x="730.83">i</tspan><tspan x="735.75" textLength="5.50" lengthAdjust="spacingAndGlyphs">n</tspan><tspan x="742.83">:</tspan></text>
<text y="227" font-family="Liberation Sans" font-size="11.5" font-weight="normal" fill="#000"><tspan x="769.25" textLength="5.50" lengthAdjust="spacingAndGlyphs">0</tspan><tspan x="776.40">.</tspan><tspan x="781.25" textLength="5.50" lengthAdjust="spacingAndGlyphs">0</tspan><tspan x="787.25" textLength="5.50" lengthAdjust="spacingAndGlyphs">0</tspan><tspan x="793.25" textLength="5.50" lengthAdjust="spacingAndGlyphs">0</tspan></text>
<text y="268" font-family="Liberation Serif" font-size="16" font-weight="normal" fill="#000" stroke="#000" stroke-width="0.15"><tspan x="717.25" textLength="7.50" lengthAdjust="spacingAndGlyphs">M</tspan><tspan x="725.25" textLength="7.50" lengthAdjust="spacingAndGlyphs">o</tspan><tspan x="733.25" textLength="7.50" lengthAdjust="spacingAndGlyphs">u</tspan><tspan x="741.89">s</tspan><tspan x="749.45">e</tspan></text>
<text y="291" font-family="Liberation Serif" font-size="16" font-weight="normal" fill="#000" stroke="#000" stroke-width="0.15"><tspan x="752.25" textLength="7.50" lengthAdjust="spacingAndGlyphs">R</tspan><tspan x="760.45">e</tspan><tspan x="769.78">t</tspan><tspan x="776.45">a</tspan><tspan x="785.34">r</tspan><tspan x="792.25" textLength="7.50" lengthAdjust="spacingAndGlyphs">d</tspan><tspan x="801.78">t</tspan><tspan x="809.78">i</tspan><tspan x="816.25" textLength="7.50" lengthAdjust="spacingAndGlyphs">o</tspan><tspan x="824.25" textLength="7.50" lengthAdjust="spacingAndGlyphs">n</tspan></text>
<text y="314" font-family="Liberation Serif" font-size="12" font-weight="normal" fill="#000" stroke="#000" stroke-width="0.12"><tspan x="708.75" textLength="5.50" lengthAdjust="spacingAndGlyphs">R</tspan><tspan x="714.84">e</tspan><tspan x="721.83">t</tspan><tspan x="726.84">a</tspan><tspan x="733.50">r</tspan><tspan x="738.75" textLength="5.50" lengthAdjust="spacingAndGlyphs">d</tspan><tspan x="745.83">t</tspan><tspan x="751.83">i</tspan><tspan x="756.75" textLength="5.50" lengthAdjust="spacingAndGlyphs">o</tspan><tspan x="762.75" textLength="5.50" lengthAdjust="spacingAndGlyphs">n</tspan><tspan x="769.50">(</tspan><tspan x="774.75" textLength="5.50" lengthAdjust="spacingAndGlyphs">n</tspan><tspan x="780.75" textLength="5.50" lengthAdjust="spacingAndGlyphs">m</tspan><tspan x="787.50">)</tspan></text>
<text y="331" font-family="Liberation Sans" font-size="11.5" font-weight="normal" fill="#000"><tspan x="712.25" textLength="5.50" lengthAdjust="spacingAndGlyphs">0</tspan><tspan x="719.40">.</tspan><tspan x="724.25" textLength="5.50" lengthAdjust="spacingAndGlyphs">0</tspan><tspan x="730.25" textLength="5.50" lengthAdjust="spacingAndGlyphs">0</tspan><tspan x="736.25" textLength="5.50" lengthAdjust="spacingAndGlyphs">0</tspan></text>
<text y="353" font-family="Liberation Serif" font-size="12" font-weight="normal" fill="#000" stroke="#000" stroke-width="0.12"><tspan x="708.75" textLength="5.50" lengthAdjust="spacingAndGlyphs">S</tspan><tspan x="715.83">t</tspan><tspan x="721.50">r</tspan><tspan x="726.84">e</tspan><tspan x="733.16">s</tspan><tspan x="739.16">s</tspan><tspan x="745.50">(</tspan><tspan x="750.75" textLength="5.50" lengthAdjust="spacingAndGlyphs">M</tspan><tspan x="756.75" textLength="5.50" lengthAdjust="spacingAndGlyphs">P</tspan><tspan x="762.84">a</tspan><tspan x="769.50">)</tspan></text>
<text y="370" font-family="Liberation Sans" font-size="11.5" font-weight="normal" fill="#000"><tspan x="712.25" textLength="5.50" lengthAdjust="spacingAndGlyphs">0</tspan><tspan x="719.40">.</tspan><tspan x="724.25" textLength="5.50" lengthAdjust="spacingAndGlyphs">0</tspan><tspan x="730.25" textLength="5.50" lengthAdjust="spacingAndGlyphs">0</tspan><tspan x="736.25" textLength="5.50" lengthAdjust="spacingAndGlyphs">0</tspan></text>
<text y="390" font-family="Liberation Serif" font-size="12" font-weight="normal" fill="#000" stroke="#000" stroke-width="0.12"><tspan x="708.75" textLength="5.50" lengthAdjust="spacingAndGlyphs">A</tspan><tspan x="714.75" textLength="5.50" lengthAdjust="spacingAndGlyphs">x</tspan><tspan x="721.83">i</tspan><tspan x="726.84">a</tspan><tspan x="733.83">l</tspan><tspan x="744.75" textLength="5.50" lengthAdjust="spacingAndGlyphs">d</tspan><tspan x="751.83">i</tspan><tspan x="757.50">r</tspan><tspan x="764.00">.</tspan><tspan x="775.50">(</tspan><tspan x="780.75" textLength="5.50" lengthAdjust="spacingAndGlyphs">d</tspan><tspan x="786.84">e</tspan><tspan x="792.75" textLength="5.50" lengthAdjust="spacingAndGlyphs">g</tspan><tspan x="800.00">.</tspan><tspan x="805.50">)</tspan></text>
<text y="407" font-family="Liberation Sans" font-size="11.5" font-weight="normal" fill="#000"><tspan x="712.25" textLength="5.50" lengthAdjust="spacingAndGlyphs">0</tspan></text>
<text y="424" font-family="Liberation Serif" font-size="12" font-weight="normal" fill="#000" stroke="#000" stroke-width="0.12"><tspan x="709.50">I</tspan><tspan x="714.75" textLength="5.50" lengthAdjust="spacingAndGlyphs">m</tspan><tspan x="720.84">a</tspan><tspan x="726.75" textLength="5.50" lengthAdjust="spacingAndGlyphs">g</tspan><tspan x="732.84">e</tspan><tspan x="745.83">l</tspan><tspan x="750.75" textLength="5.50" lengthAdjust="spacingAndGlyphs">u</tspan><tspan x="756.75" textLength="5.50" lengthAdjust="spacingAndGlyphs">m</tspan><tspan x="763.83">i</tspan><tspan x="768.75" textLength="5.50" lengthAdjust="spacingAndGlyphs">n</tspan><tspan x="774.84">a</tspan><tspan x="780.75" textLength="5.50" lengthAdjust="spacingAndGlyphs">n</tspan><tspan x="786.84">c</tspan><tspan x="792.84">e</tspan></text>
<text y="442" font-family="Liberation Sans" font-size="11.5" font-weight="normal" fill="#000"><tspan x="712.25" textLength="5.50" lengthAdjust="spacingAndGlyphs">0</tspan><tspan x="719.40">.</tspan><tspan x="724.25" textLength="5.50" lengthAdjust="spacingAndGlyphs">0</tspan><tspan x="730.25" textLength="5.50" lengthAdjust="spacingAndGlyphs">0</tspan><tspan x="736.25" textLength="5.50" lengthAdjust="spacingAndGlyphs">0</tspan></text>
<text y="472" font-family="Liberation Serif" font-size="12" font-weight="normal" fill="#000" stroke="#000" stroke-width="0.12"><tspan x="766.75" textLength="5.50" lengthAdjust="spacingAndGlyphs">X</tspan><tspan x="773.83">:</tspan></text>
<text y="473" font-family="Liberation Sans" font-size="11.5" font-weight="normal" fill="#000"><tspan x="793.25" textLength="5.50" lengthAdjust="spacingAndGlyphs">4</tspan><tspan x="799.25" textLength="5.50" lengthAdjust="spacingAndGlyphs">5</tspan><tspan x="805.25" textLength="5.50" lengthAdjust="spacingAndGlyphs">1</tspan></text>
<text y="497" font-family="Liberation Serif" font-size="12" font-weight="normal" fill="#000" stroke="#000" stroke-width="0.12"><tspan x="766.75" textLength="5.50" lengthAdjust="spacingAndGlyphs">Y</tspan><tspan x="773.83">:</tspan></text>
<text y="498" font-family="Liberation Sans" font-size="11.5" font-weight="normal" fill="#000"><tspan x="793.25" textLength="5.50" lengthAdjust="spacingAndGlyphs">1</tspan><tspan x="799.25" textLength="5.50" lengthAdjust="spacingAndGlyphs">4</tspan><tspan x="805.25" textLength="5.50" lengthAdjust="spacingAndGlyphs">1</tspan></text>
<text y="556" font-family="Liberation Serif" font-size="12" font-weight="normal" fill="#000" stroke="#000" stroke-width="0.12"><tspan x="754.00">I</tspan><tspan x="759.25" textLength="5.50" lengthAdjust="spacingAndGlyphs">m</tspan><tspan x="765.34">a</tspan><tspan x="771.25" textLength="5.50" lengthAdjust="spacingAndGlyphs">g</tspan><tspan x="777.34">e</tspan><tspan x="789.25" textLength="5.50" lengthAdjust="spacingAndGlyphs">d</tspan><tspan x="795.34">a</tspan><tspan x="802.33">t</tspan><tspan x="807.34">a</tspan></text>
<text y="568" font-family="Liberation Serif" font-size="12" font-weight="normal" fill="#000" stroke="#000" stroke-width="0.12"><tspan x="769.66">s</tspan><tspan x="775.34">a</tspan><tspan x="781.25" textLength="5.50" lengthAdjust="spacingAndGlyphs">v</tspan><tspan x="787.34">e</tspan><tspan x="793.25" textLength="5.50" lengthAdjust="spacingAndGlyphs">1</tspan></text>
<text y="600" font-family="Liberation Serif" font-size="12" font-weight="normal" fill="#000" stroke="#000" stroke-width="0.12"><tspan x="753.25" textLength="5.50" lengthAdjust="spacingAndGlyphs">G</tspan><tspan x="760.00">r</tspan><tspan x="765.34">a</tspan><tspan x="771.25" textLength="5.50" lengthAdjust="spacingAndGlyphs">p</tspan><tspan x="777.25" textLength="5.50" lengthAdjust="spacingAndGlyphs">h</tspan><tspan x="789.25" textLength="5.50" lengthAdjust="spacingAndGlyphs">d</tspan><tspan x="795.34">a</tspan><tspan x="802.33">t</tspan><tspan x="807.34">a</tspan></text>
<text y="612" font-family="Liberation Serif" font-size="12" font-weight="normal" fill="#000" stroke="#000" stroke-width="0.12"><tspan x="769.66">s</tspan><tspan x="775.34">a</tspan><tspan x="781.25" textLength="5.50" lengthAdjust="spacingAndGlyphs">v</tspan><tspan x="787.34">e</tspan><tspan x="793.25" textLength="5.50" lengthAdjust="spacingAndGlyphs">1</tspan></text>
<text y="650" font-family="Liberation Serif" font-size="12" font-weight="normal" fill="#000" stroke="#000" stroke-width="0.12"><tspan x="768.25" textLength="5.50" lengthAdjust="spacingAndGlyphs">E</tspan><tspan x="774.25" textLength="5.50" lengthAdjust="spacingAndGlyphs">x</tspan><tspan x="781.33">i</tspan><tspan x="787.33">t</tspan><tspan x="792.25" textLength="5.50" lengthAdjust="spacingAndGlyphs">1</tspan></text></svg>
</body></html>
